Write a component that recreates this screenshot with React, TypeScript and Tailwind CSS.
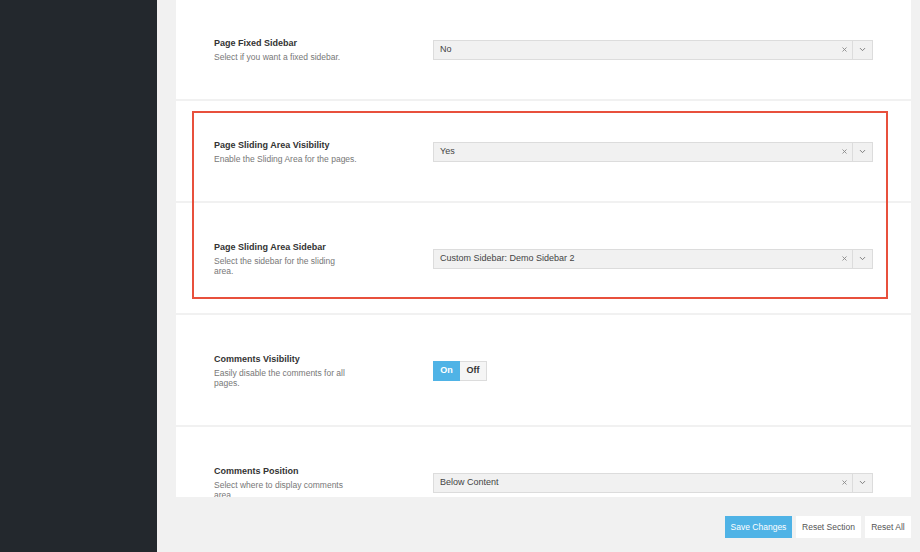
import { X, ChevronDown } from 'lucide-react';

const font = { fontFamily: '"Liberation Sans", Arial, sans-serif' };

function Select({ value }: { value: string }) {
  return (
    <div className="flex h-[20px] w-[440px] items-center border border-[#dcdcdc] bg-[#f1f1f1] text-[9px] text-[#444]">
      <span className="flex-1 pl-[6px]">{value}</span>
      <X size={7} strokeWidth={3} className="mr-[4px] text-[#888]" />
      <span className="flex h-full w-[20px] items-center justify-center border-l border-[#dcdcdc]">
        <ChevronDown size={9} strokeWidth={2.5} className="text-[#777]" />
      </span>
    </div>
  );
}

function Toggle() {
  return (
    <div className="flex h-[20px] text-[9px] font-bold">
      <span className="flex w-[27px] items-center justify-center bg-[#4fb3e6] text-white">On</span>
      <span className="flex w-[27px] items-center justify-center border border-l-0 border-[#dcdcdc] bg-[#f5f5f5] text-[#333]">Off</span>
    </div>
  );
}

function Row({ title, desc, children, last }: { title: string; desc: string; children: React.ReactNode; last?: boolean }) {
  return (
    <div className={`flex items-center pt-[38px] pb-[37px] pl-[38px] pr-[38px] ${last ? '' : 'border-b-2 border-[#f1f1f1]'}`}>
      <div className="w-[219px] shrink-0">
        <div className="mb-[3px] text-[9px] font-bold leading-[12px] text-[#333]">{title}</div>
        <div className="whitespace-pre-line text-[8.5px] leading-[10px] text-[#777]">{desc}</div>
      </div>
      {children}
    </div>
  );
}

export default function App() {
  return (
    <div className="flex h-[552px] w-[920px] overflow-hidden" style={font}>
      <aside className="w-[157px] shrink-0 bg-[#23282d]" />
      <main className="flex flex-1 flex-col bg-[#f1f1f1] pl-[19px] pr-[9px]">
        <div className="h-[497px] overflow-hidden bg-white">
          <div className="-mt-[1px]">
            <Row title="Page Fixed Sidebar" desc="Select if you want a fixed sidebar.">
              <Select value="No" />
            </Row>
            <div className="relative">
              <Row title="Page Sliding Area Visibility" desc="Enable the Sliding Area for the pages.">
                <Select value="Yes" />
              </Row>
              <Row title="Page Sliding Area Sidebar" desc={'Select the sidebar for the sliding\narea.'}>
                <Select value="Custom Sidebar: Demo Sidebar 2" />
              </Row>
              {/* highlight annotation */}
              <div className="pointer-events-none absolute top-[10px] bottom-[16px] left-[16px] right-[23px] border-2 border-[#e8503c]" />
            </div>
            <Row title="Comments Visibility" desc={'Easily disable the comments for all\npages.'}>
              <Toggle />
            </Row>
            <Row title="Comments Position" desc={'Select where to display comments\narea.'} last>
              <Select value="Below Content" />
            </Row>
          </div>
        </div>
        <div className="mt-[19px] flex justify-end gap-[4px] text-[8.5px]">
          <button className="h-[22px] w-[67px] bg-[#4fb3e6] text-white">Save Changes</button>
          <button className="h-[22px] w-[65px] bg-white text-[#555]">Reset Section</button>
          <button className="h-[22px] w-[46px] bg-white text-[#555]">Reset All</button>
        </div>
      </main>
    </div>
  );
}
